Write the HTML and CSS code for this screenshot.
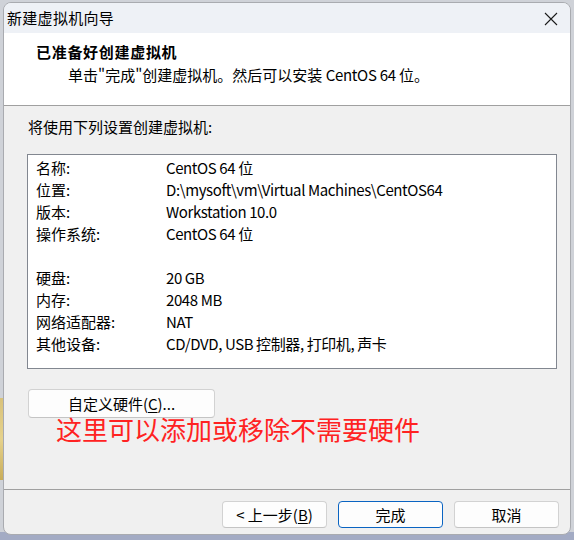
FILE: index.html
```html
<!DOCTYPE html>
<html lang="zh-CN">
<head>
<meta charset="utf-8">
<title>新建虚拟机向导</title>
<link rel="stylesheet" href="styles.css">
</head>
<body>
<div class="desktop">
  <div class="desk-icon"></div>
  <div class="window">
    <div class="titlebar">
      <span class="title">新建虚拟机向导</span>
      <span class="close" aria-label="关闭">
        <svg width="14" height="14" viewBox="0 0 14 14"><path d="M1 1 L13 13 M13 1 L1 13" stroke="#1b1b1b" stroke-width="1.1" fill="none"/></svg>
      </span>
    </div>
    <div class="header">
      <div class="h-title">已准备好创建虚拟机</div>
      <div class="h-sub">单击"完成"创建虚拟机。然后可以安装 <span class="lat">CentOS 64</span> 位。</div>
    </div>
    <div class="content">
      <div class="intro">将使用下列设置创建虚拟机:</div>
      <div class="listbox">
        <div class="row"><span class="k">名称:</span><span class="v">CentOS 64 位</span></div>
        <div class="row"><span class="k">位置:</span><span class="v">D:\mysoft\vm\Virtual Machines\CentOS64</span></div>
        <div class="row"><span class="k">版本:</span><span class="v">Workstation 10.0</span></div>
        <div class="row"><span class="k">操作系统:</span><span class="v">CentOS 64 位</span></div>
        <div class="row blank"></div>
        <div class="row"><span class="k">硬盘:</span><span class="v">20 GB</span></div>
        <div class="row"><span class="k">内存:</span><span class="v">2048 MB</span></div>
        <div class="row"><span class="k">网络适配器:</span><span class="v">NAT</span></div>
        <div class="row"><span class="k">其他设备:</span><span class="v">CD/DVD, USB 控制器, 打印机, 声卡</span></div>
      </div>
      <button class="btn custom">自定义硬件(<u>C</u>)...</button>
      <div class="note">这里可以添加或移除不需要硬件</div>
    </div>
    <div class="footer">
      <button class="btn">&lt; 上一步(<u>B</u>)</button>
      <button class="btn primary">完成</button>
      <button class="btn">取消</button>
    </div>
  </div>
</div>
</body>
</html>
```
FILE: styles.css
```css
* { box-sizing: border-box; }
html, body {
  margin: 0;
  padding: 0;
  width: 574px;
  height: 540px;
  overflow: hidden;
}
body {
  background: linear-gradient(to bottom, #cfd2d8 0, #cfd2d8 532px, #a3abc4 532px, #a3abc4 540px);
  font-family: "Noto Sans CJK SC", "Noto Sans", sans-serif;
  font-size: 15px;
  color: #000;
}
.desktop {
  position: relative;
  padding: 2px 3px 0 3px;
}
.desk-icon {
  position: absolute;
  left: 0;
  top: 398px;
  width: 4px;
  height: 82px;
  background: linear-gradient(to bottom, #d9c27a, #e6d28c 50%, #c9ad5a);
}
.window {
  position: relative;
  width: 568px;
  height: 533px;
  border: 1px solid #a9abb0;
  border-radius: 8px;
  background: #f0f0f0;
  overflow: hidden;
  display: flex;
  flex-direction: column;
}
.titlebar {
  height: 30px;
  flex: none;
  background: #eef1f6;
  display: flex;
  align-items: center;
  justify-content: space-between;
  padding: 0 12px 0 3px;
}
.title {
  font-size: 15px;
  line-height: 20px;
  letter-spacing: 0.3px;
}
.close {
  display: flex;
  width: 14px;
  height: 14px;
  margin-top: 1px;
}
.header {
  height: 73px;
  flex: none;
  background: #fff;
  border-bottom: 1px solid #a0a0a0;
  padding: 8px 0 0 32px;
}
.h-title {
  font-weight: bold;
  line-height: 22px;
  letter-spacing: 0.7px;
}
.h-sub {
  line-height: 22px;
  padding-left: 32px;
  margin-top: 1px;
}
.lat {
  letter-spacing: -0.3px;
}
.content {
  flex: 1;
  padding: 10px 0 0 23px;
}
.intro {
  line-height: 22px;
  padding-left: 1px;
}
.listbox {
  margin-top: 16px;
  width: 530px;
  height: 215px;
  background: #fff;
  border: 1px solid #828790;
  padding: 2px 0 0 8px;
}
.row {
  display: grid;
  grid-template-columns: 130px 1fr;
  height: 22px;
  line-height: 22px;
  white-space: nowrap;
}
.v {
  letter-spacing: -0.4px;
}
.btn {
  font-family: inherit;
  font-size: 15px;
  color: #000;
  background: #fdfdfd;
  border: 1px solid #d2d2d2;
  border-bottom-color: #c4c4c4;
  border-radius: 4px;
  padding: 0;
  line-height: 20px;
}
.btn u { text-underline-offset: 2px; }
.custom {
  display: block;
  margin: 20px 0 0 1px;
  width: 187px;
  height: 29px;
}
.note {
  margin: -1px 0 0 29px;
  font-size: 26px;
  line-height: 24px;
  color: #ff2222;
  white-space: nowrap;
}
.footer {
  height: 45px;
  flex: none;
  border-top: 1px solid #a0a0a0;
  display: flex;
  justify-content: flex-end;
  gap: 11px;
  padding: 11px 11px 0 0;
}
.footer .btn {
  width: 105px;
  height: 27px;
}
.footer .primary {
  border: 1px solid #0a64c2;
}
```
